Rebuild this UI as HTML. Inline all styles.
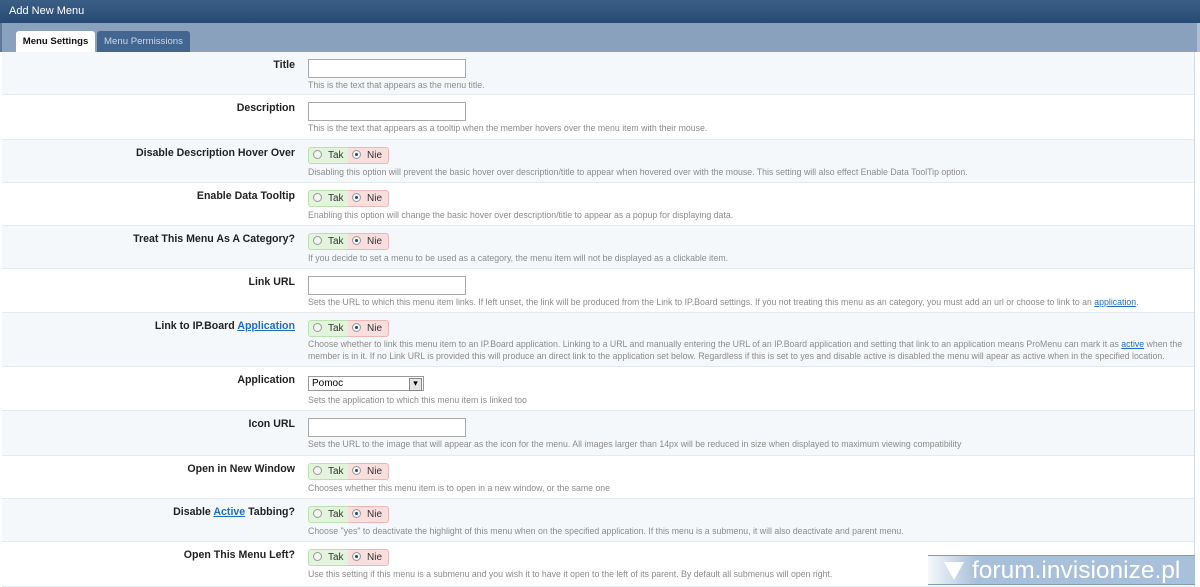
<!DOCTYPE html>
<html><head><meta charset="utf-8"><style>
*{margin:0;padding:0;box-sizing:border-box}
body{width:1200px;height:587px;overflow:hidden;background:#fff;font-family:"Liberation Sans",Arial,sans-serif;position:relative}
.hdr{position:absolute;left:0;top:0;width:1200px;height:23px;background:linear-gradient(#3b5e86,#274a72);color:#fff;font-size:11px;line-height:22px;padding-left:9px}
.tabs{position:absolute;left:0;top:23px;width:1200px;height:29px;background:#8aa1bd;border-left:2px solid #5d7a9c;border-right:3px solid #b0c0d4}
.tab{position:absolute;top:8px;height:21px;font-size:9.6px;line-height:21px;text-align:center;border-radius:3px 3px 0 0;white-space:nowrap}
.t1{left:14px;width:79px;background:#fff;color:#111;font-weight:bold}
.t2{left:95px;width:93px;background:#426690;color:#cdd8e6}
.rows{position:absolute;left:2px;top:52px;width:1193px;border-right:1px solid #d5dde6}
.row{position:relative;border-bottom:1px solid #e4eaf0}
.row:nth-child(odd){background:#f5f8fb}
.lbl{position:absolute;right:899px;top:7px;font-size:10.6px;font-weight:bold;color:#222;text-align:right;white-space:nowrap}
.f{position:absolute;left:306px;top:7px}
.d{position:absolute;left:306px;font-size:8.75px;color:#8b8b8b;line-height:12px;width:880px}
a{color:#1f6dbd;text-decoration:underline}
.in{width:158px;height:19px;border:1px solid #a9a9a9;background:#fff}
.yn{display:flex;height:17px;font-size:10px;line-height:15px;color:#333}
.y{width:40px;background:#e3f4dc;border:1px solid #bde0b0;border-right:none;border-radius:3px 0 0 3px;padding-left:4px}
.n{width:41px;background:#f9dede;border:1px solid #e9b8b8;border-left:none;border-radius:0 3px 3px 0;padding-left:4px}
.r{display:inline-block;width:9px;height:9px;border:1px solid #999;border-radius:50%;background:#f4f4f4;vertical-align:-1px;margin-right:6px;position:relative}
.r.on:after{content:"";position:absolute;left:2px;top:2px;width:3px;height:3px;border-radius:50%;background:#1c4d7a}
.sel{width:116px;height:15px;border:1px solid #999;background:#fff;font-size:10px;line-height:13px;padding-left:3px;position:relative}
.sel:after{content:"▾";position:absolute;right:1px;top:1px;width:11px;height:11px;background:#e5e5e5;border:1px solid #888;font-size:9px;line-height:9px;text-align:center}
.wm{position:absolute;left:928px;top:555px;width:267px;height:30px;background:linear-gradient(90deg,rgba(160,185,215,0.1),#a9c0da 18%,#a9c0da);color:#fff;font-size:24.5px;line-height:29px;padding-left:44px;border-top:1px solid #7f9cc0;border-bottom:1px solid #7f9cc0;white-space:nowrap}
.wm .v{position:absolute;left:16px;top:6px;width:0;height:0;border-left:10px solid transparent;border-right:10px solid transparent;border-top:18px solid #fff}
</style></head><body>
<div class="hdr">Add New Menu</div>
<div class="tabs"><div class="tab t1">Menu Settings</div><div class="tab t2">Menu Permissions</div></div>
<div class="rows">
<div class="row" style="height:43px"><div class="lbl">Title</div><div class="f"><div class="in"></div></div><div class="d" style="top:27px">This is the text that appears as the menu title.</div></div>
<div class="row" style="height:45px"><div class="lbl">Description</div><div class="f"><div class="in"></div></div><div class="d" style="top:27px">This is the text that appears as a tooltip when the member hovers over the menu item with their mouse.</div></div>
<div class="row" style="height:43px"><div class="lbl">Disable Description Hover Over</div><div class="f yn"><div class="y"><span class="r"></span>Tak</div><div class="n"><span class="r on"></span>Nie</div></div><div class="d" style="top:26px">Disabling this option will prevent the basic hover over description/title to appear when hovered over with the mouse. This setting will also effect Enable Data ToolTip option.</div></div>
<div class="row" style="height:43px"><div class="lbl">Enable Data Tooltip</div><div class="f yn"><div class="y"><span class="r"></span>Tak</div><div class="n"><span class="r on"></span>Nie</div></div><div class="d" style="top:26px">Enabling this option will change the basic hover over description/title to appear as a popup for displaying data.</div></div>
<div class="row" style="height:43px"><div class="lbl">Treat This Menu As A Category?</div><div class="f yn"><div class="y"><span class="r"></span>Tak</div><div class="n"><span class="r on"></span>Nie</div></div><div class="d" style="top:26px">If you decide to set a menu to be used as a category, the menu item will not be displayed as a clickable item.</div></div>
<div class="row" style="height:44px"><div class="lbl">Link URL</div><div class="f"><div class="in"></div></div><div class="d" style="top:27px">Sets the URL to which this menu item links. If left unset, the link will be produced from the Link to IP.Board settings. If you not treating this menu as an category, you must add an url or choose to link to an <a>application</a>.</div></div>
<div class="row" style="height:54px"><div class="lbl">Link to IP.Board <a>Application</a></div><div class="f yn"><div class="y"><span class="r"></span>Tak</div><div class="n"><span class="r on"></span>Nie</div></div><div class="d" style="top:25px">Choose whether to link this menu item to an IP.Board application. Linking to a URL and manually entering the URL of an IP.Board application and setting that link to an application means ProMenu can mark it as <a>active</a> when the member is in it. If no Link URL is provided this will produce an direct link to the application set below. Regardless if this is set to yes and disable active is disabled the menu will apear as active when in the specified location.</div></div>
<div class="row" style="height:44px"><div class="lbl">Application</div><div class="f" style="top:9px"><div class="sel">Pomoc</div></div><div class="d" style="top:27px">Sets the application to which this menu item is linked too</div></div>
<div class="row" style="height:45px"><div class="lbl">Icon URL</div><div class="f"><div class="in"></div></div><div class="d" style="top:27px">Sets the URL to the image that will appear as the icon for the menu. All images larger than 14px will be reduced in size when displayed to maximum viewing compatibility</div></div>
<div class="row" style="height:43px"><div class="lbl">Open in New Window</div><div class="f yn"><div class="y"><span class="r"></span>Tak</div><div class="n"><span class="r on"></span>Nie</div></div><div class="d" style="top:26px">Chooses whether this menu item is to open in a new window, or the same one</div></div>
<div class="row" style="height:43px"><div class="lbl">Disable <a>Active</a> Tabbing?</div><div class="f yn"><div class="y"><span class="r"></span>Tak</div><div class="n"><span class="r on"></span>Nie</div></div><div class="d" style="top:26px">Choose "yes" to deactivate the highlight of this menu when on the specified application. If this menu is a submenu, it will also deactivate and parent menu.</div></div>
<div class="row" style="height:45px"><div class="lbl">Open This Menu Left?</div><div class="f yn"><div class="y"><span class="r"></span>Tak</div><div class="n"><span class="r on"></span>Nie</div></div><div class="d" style="top:26px">Use this setting if this menu is a submenu and you wish it to have it open to the left of its parent. By default all submenus will open right.</div></div>
</div>
<div class="wm"><span class="v"></span>forum.invisionize.pl</div>
</body></html>
